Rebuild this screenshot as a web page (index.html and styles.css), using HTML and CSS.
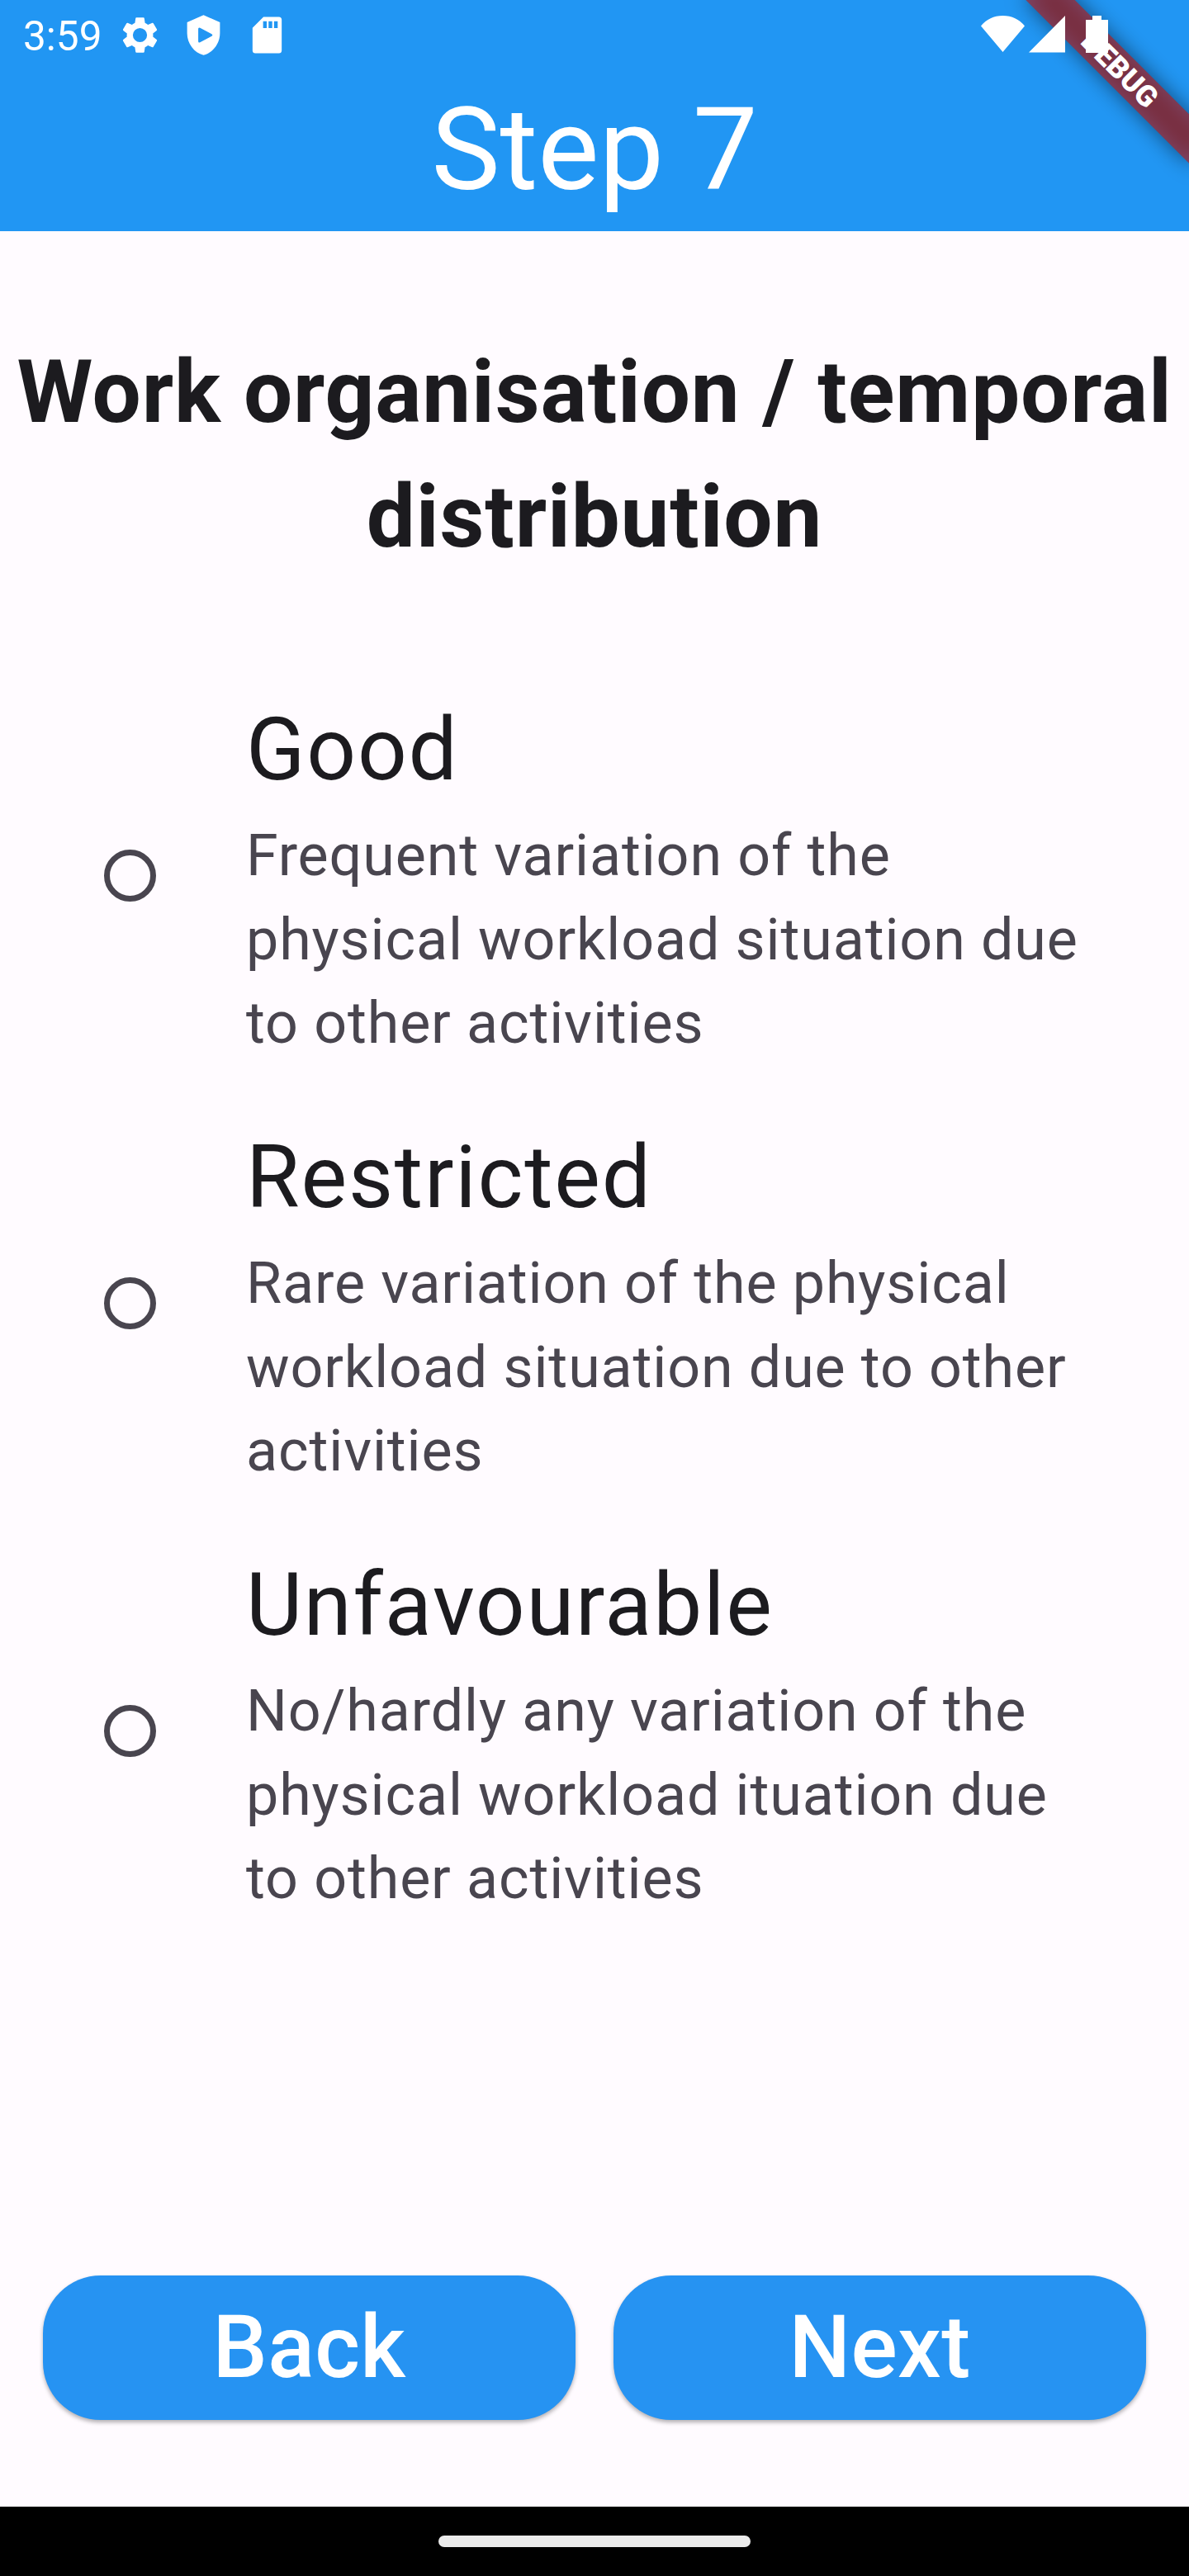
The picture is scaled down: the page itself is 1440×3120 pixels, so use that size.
FILE: index.html
```html
<!DOCTYPE html>
<html lang="en">
<head>
<meta charset="utf-8">
<title>Step 7</title>
<link rel="stylesheet" href="styles.css">
</head>
<body>
<header class="appbar">
  <div class="status">
    <span class="clock">3:59</span>
    <svg class="gear" viewBox="0 0 24 24"><path d="M19.14 12.94c.04-.3.06-.61.06-.94s-.02-.64-.07-.94l2.03-1.58a.49.49 0 0 0 .12-.61l-1.92-3.32a.49.49 0 0 0-.59-.22l-2.39.96a7 7 0 0 0-1.62-.94l-.36-2.54a.48.48 0 0 0-.48-.41h-3.84a.47.47 0 0 0-.47.41l-.36 2.54a7.3 7.3 0 0 0-1.62.94l-2.39-.96a.48.48 0 0 0-.59.22L2.74 8.87a.48.48 0 0 0 .12.61l2.03 1.58a6 6 0 0 0-.02 1.88l-2.03 1.58a.49.49 0 0 0-.12.61l1.92 3.32c.12.22.37.29.59.22l2.39-.96c.5.38 1.03.7 1.62.94l.36 2.54c.05.24.24.41.48.41h3.84c.24 0 .44-.17.47-.41l.36-2.54a7 7 0 0 0 1.62-.94l2.39.96c.22.08.47 0 .59-.22l1.92-3.32a.48.48 0 0 0-.12-.61zM12 15.9a3.9 3.9 0 1 1 0-7.8 3.9 3.9 0 0 1 0 7.8z"/></svg>
    <svg class="shield" viewBox="0 0 24 24"><path fill-rule="evenodd" d="M12 1 3 5v6c0 5.550 3.840 10.740 9 12 5.160-1.260 9-6.450 9-12V5zM9.100 8.600q0-1 1-.6l6.400 3.400q.8.600 0 1.200l-6.400 3.400q-1 .4-1-.6z"/></svg>
    <svg class="sd" viewBox="0 0 24 24"><path fill-rule="evenodd" d="M18 2h-8L4 8v12.500c0 .9.600 1.500 1.500 1.500h13c.9 0 1.500-.6 1.500-1.500v-17C20 2.600 19.400 2 18.500 2zm-6.200 6.200h-2V4.400h2zm3 0h-2V4.400h2zm3 0h-2V4.400h2z"/></svg>
    <svg class="signals" viewBox="0 0 160 46"><path d="M0 12.500Q10 0 26.500 0T53 12.500L26.500 44ZM102 0V44.500H58Z"/><path d="M127 5h8V0h11v5h8v40h-27z"/></svg>
  </div>
  <h1 class="title">Step 7</h1>
</header>
<div class="debug"><div class="debug-shadow"></div><div class="debug-band">DEBUG</div></div>
<main class="content">
  <h2 class="heading">Work organisation / temporal<br>distribution</h2>
  <div class="option"><i class="dot"></i><div class="text"><div class="name">Good</div><p class="desc">Frequent variation of the<br>physical workload situation due<br>to other activities</p></div></div>
  <div class="option"><i class="dot"></i><div class="text"><div class="name">Restricted</div><p class="desc">Rare variation of the physical<br>workload situation due to other<br>activities</p></div></div>
  <div class="option"><i class="dot"></i><div class="text"><div class="name">Unfavourable</div><p class="desc">No/hardly any variation of the<br>physical workload ituation due<br>to other activities</p></div></div>
</main>
<div class="actions"><button class="btn">Back</button><button class="btn">Next</button></div>
<footer class="nav"><span class="pill"></span></footer>
</body>
</html>
```
FILE: styles.css
```css
* { box-sizing: border-box; margin: 0; padding: 0; }
body { width: 1440px; height: 3120px; position: relative; overflow: hidden; display: flex; flex-direction: column; background: #fffbff; font-family: Roboto, sans-serif; color: #1c1b1f; }
.appbar { height: 280px; background: #2196f3; color: #fff; }
.status { height: 84px; display: flex; align-items: center; padding-left: 28px; }
.status svg { position: relative; z-index: 2; fill: #fff; height: 53px; width: 53px; }
.clock { font-size: 49.5px; width: 115px; padding-top: 4px; }
.status .shield { margin-left: 24px; }
.status .sd { margin-left: 24px; }
.status .signals { width: 160px; height: 46px; margin-left: auto; margin-right: 92px; }
.title { font-size: 140px; line-height: 194px; font-weight: 400; text-align: center; }
/* Corner ribbon, rotated about the centre of the band; lies over the app bar, under the status icons */
.debug { position: absolute; z-index: 1; right: 0; top: 0; width: 280px; height: 280px; overflow: hidden; }
.debug-shadow, .debug-band { position: absolute; left: 56px; top: 63px; width: 280px; height: 42px; transform: rotate(45deg); }
.debug-shadow { background: rgba(0, 0, 0, .5); filter: blur(12.6px); }
.debug-band { background: rgba(183, 28, 28, .627); color: #fff; font-size: 35.7px; line-height: 42px; font-weight: 900; text-align: center; }
.content { flex: 1; }
.heading { padding-top: 120px; height: 521.5px; font-size: 105px; line-height: 151px; font-weight: 700; letter-spacing: .875px; text-align: center; white-space: nowrap; }
.option { display: flex; align-items: center; height: 518px; padding-left: 126px; }
.dot { width: 63px; height: 63px; border: 7px solid #49454f; border-radius: 50%; margin-right: 109px; }
.text { padding-top: 3px; }
.name { font-size: 105px; line-height: 152px; margin-bottom: 1px; letter-spacing: 1.75px; }
.desc { font-size: 70px; line-height: 101.5px; color: #49454f; letter-spacing: .875px; }
.actions { display: flex; gap: 46px; padding: 0 52px; height: 280px; }
.btn { flex: 1; height: 175px; border: 0; border-radius: 70px; background: #2693f2; color: #fff; font: 500 105px Roboto, sans-serif; letter-spacing: .35px; box-shadow: 0 3px 5px rgba(0, 0, 0, .3); }
.nav { height: 84px; background: #000; display: flex; align-items: center; justify-content: center; }
.pill { width: 378px; height: 14px; border-radius: 7px; background: #ebebeb; }
```
